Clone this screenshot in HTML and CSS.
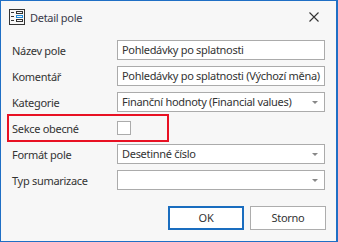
FILE: index.html
```html
<!DOCTYPE html>
<html lang="cs">
<head>
<meta charset="UTF-8" />
<title>Detail pole</title>
<link rel="stylesheet" href="styles.css">
</head>
<body>
  <div class="window">
    <!-- Title bar -->
    <div class="titlebar">
      <svg class="app-icon" width="16" height="16" viewBox="0 0 16 16">
        <rect x="0.5" y="0.5" width="15" height="15" fill="none" stroke="#333" />
        <path d="M2 3.5h3M2 7.5h3M2 11.5h3" stroke="#333" />
        <rect x="7.5" y="2.5" width="6" height="2" fill="none" stroke="#333" />
        <rect x="7.5" y="6.5" width="6" height="2" fill="none" stroke="#1e88d8" />
        <rect x="7.5" y="10.5" width="6" height="2" fill="none" stroke="#333" />
      </svg>
      <span class="title">Detail pole</span>
      <svg class="close" width="10" height="10" viewBox="0 0 10 10">
        <path d="M0.5 0.5L9.5 9.5M9.5 0.5L0.5 9.5" stroke="#333" stroke-width="1.1" />
      </svg>
    </div>

    <!-- Form -->
    <div class="form">
      <div class="row">
        <label>Název pole</label>
        <div class="field">Pohledávky po splatnosti</div>
      </div>
      <div class="row">
        <label>Komentář</label>
        <div class="field">Pohledávky po splatnosti (Výchozí měna)</div>
      </div>
      <div class="row">
        <label>Kategorie</label>
        <div class="field select">Finanční hodnoty (Financial values)</div>
      </div>
      <div class="row highlighted">
        <label>Sekce obecné</label>
        <div class="checkbox"></div>
      </div>
      <div class="row">
        <label>Formát pole</label>
        <div class="field select">Desetinné číslo</div>
      </div>
      <div class="row">
        <label>Typ sumarizace</label>
        <div class="field select"></div>
      </div>
    </div>

    <!-- Buttons -->
    <div class="buttons">
      <div class="btn primary">OK</div>
      <div class="btn">Storno</div>
    </div>
  </div>
</body>
</html>
```

FILE: styles.css
```css
body {
  margin: 0;
  font-family: "Noto Sans", "Open Sans", sans-serif;
  font-size: 11px;
  letter-spacing: -0.3px;
  color: #333;
}

.window {
  width: 338px;
  height: 242px;
  box-sizing: border-box;
  border: 1px solid #1f6fc5;
  border-right-width: 2px;
  background: #f7f7f7;
  display: flex;
  flex-direction: column;
}

.titlebar {
  height: 31px;
  display: flex;
  align-items: center;
  padding: 1px 0 0 8px;
  box-sizing: border-box;
}

.app-icon {
  margin-right: 5px;
}

.title {
  flex: 1;
  color: #3a3a4a;
}

.close {
  margin-right: 17px;
}

.form {
  display: flex;
  flex-direction: column;
  gap: 6px;
  padding: 8px 0 0 11px;
}

.row {
  display: flex;
  align-items: center;
  height: 20px;
  position: relative;
}

.row label {
  width: 105px;
}

.field {
  width: 208px;
  height: 20px;
  box-sizing: border-box;
  border: 1px solid #ababab;
  background: #fff;
  padding: 0 4px;
  line-height: 18px;
  white-space: nowrap;
  overflow: hidden;
  position: relative;
}

.field.select::after {
  content: "";
  position: absolute;
  right: 6px;
  top: 8px;
  border-left: 3px solid transparent;
  border-right: 3px solid transparent;
  border-top: 3px solid #888;
}

.checkbox {
  width: 14px;
  height: 14px;
  box-sizing: border-box;
  border: 1px solid #ababab;
  background: #fff;
}

/* red annotation frame around the row */
.highlighted::before {
  content: "";
  position: absolute;
  left: -5px;
  top: -4px;
  width: 162px;
  height: 28px;
  box-sizing: border-box;
  border: 2px solid #e81123;
}

.buttons {
  display: flex;
  justify-content: flex-end;
  gap: 6px;
  padding: 16px 10px 0 0;
}

.btn {
  width: 76px;
  height: 24px;
  box-sizing: border-box;
  border: 1px solid #adadad;
  background: #fff;
  text-align: center;
  line-height: 22px;
}

.btn.primary {
  border: 2px solid #1a6dbf;
  line-height: 20px;
}
```
